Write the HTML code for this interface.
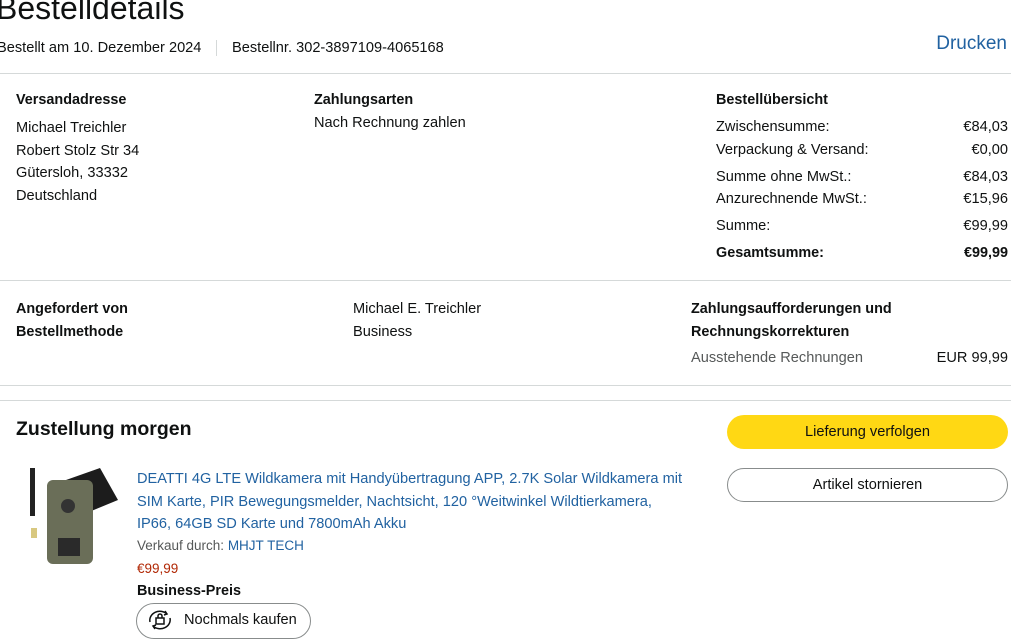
<!DOCTYPE html>
<html><head><meta charset="utf-8"><style>
*{margin:0;padding:0;box-sizing:border-box}
body{width:1011px;height:634px;overflow:hidden;background:#fff;font-family:"Liberation Sans",Arial,sans-serif;color:#0f1111;font-size:14.6px;position:relative}
.a{position:absolute;white-space:nowrap;line-height:20px}
.b{font-weight:bold;font-size:14.4px}
.hr{position:absolute;left:0;width:1011px;height:1px;background:#d5d9d9}
.r{text-align:right}
.lnk{color:#2162a1}
.btn{position:absolute;border-radius:20px;text-align:center;line-height:34px;font-size:14.6px}
</style></head><body>
<div class="a" style="left:-4px;top:-10px;font-size:32px;line-height:36px">Bestelldetails</div>
<div class="a" style="left:-3px;top:38px">Bestellt am 10. Dezember 2024</div>
<div style="position:absolute;left:216px;top:40px;width:1px;height:16px;background:#d5d9d9"></div>
<div class="a" style="left:232px;top:38px">Bestellnr. 302-3897109-4065168</div>
<div class="a lnk" style="right:4px;top:33px;font-size:19px;line-height:22px">Drucken</div>
<div class="hr" style="top:73px"></div>

<div class="a b" style="left:16px;top:90px">Versandadresse</div>
<div class="a" style="left:16px;top:117px;line-height:22.6px">Michael Treichler<br>Robert Stolz Str 34<br>Gütersloh, 33332<br>Deutschland</div>
<div class="a b" style="left:314px;top:90px">Zahlungsarten</div>
<div class="a" style="left:314px;top:113px">Nach Rechnung zahlen</div>
<div class="a b" style="left:716px;top:90px">Bestellübersicht</div>
<div class="a" style="left:716px;top:117px">Zwischensumme:</div><div class="a r" style="right:3px;top:117px">€84,03</div>
<div class="a" style="left:716px;top:140px">Verpackung &amp; Versand:</div><div class="a r" style="right:3px;top:140px">€0,00</div>
<div class="a" style="left:716px;top:167px">Summe ohne MwSt.:</div><div class="a r" style="right:3px;top:167px">€84,03</div>
<div class="a" style="left:716px;top:189px">Anzurechnende MwSt.:</div><div class="a r" style="right:3px;top:189px">€15,96</div>
<div class="a" style="left:716px;top:216px">Summe:</div><div class="a r" style="right:3px;top:216px">€99,99</div>
<div class="a b" style="left:716px;top:243px">Gesamtsumme:</div><div class="a r b" style="right:3px;top:243px">€99,99</div>
<div class="hr" style="top:280px"></div>

<div class="a b" style="left:16px;top:298px;line-height:23px">Angefordert von<br>Bestellmethode</div>
<div class="a" style="left:353px;top:298px;line-height:23px">Michael E. Treichler<br>Business</div>
<div class="a b" style="left:691px;top:298px;line-height:23px">Zahlungsaufforderungen und<br>Rechnungskorrekturen</div>
<div class="a" style="left:691px;top:348px;color:#565959">Ausstehende Rechnungen</div>
<div class="a r" style="right:3px;top:348px">EUR 99,99</div>
<div class="hr" style="top:385px"></div>
<div class="hr" style="top:400px"></div>

<div class="a" style="left:16px;top:417px;font-size:19.5px;line-height:24px;font-weight:bold">Zustellung morgen</div>
<div class="btn" style="left:727px;top:415px;width:281px;height:34px;background:#ffd814">Lieferung verfolgen</div>
<div class="btn" style="left:727px;top:468px;width:281px;height:34px;border:1px solid #888c8c;line-height:32px">Artikel stornieren</div>

<svg style="position:absolute;left:22px;top:466px" width="100" height="104" viewBox="0 0 100 104">
<rect x="8" y="2" width="5" height="48" fill="#222"/>
<polygon points="44,14 78,2 96,34 62,48" fill="#1c1c1c"/>
<rect x="25" y="14" width="46" height="84" rx="6" fill="#6a6e58"/>
<circle cx="46" cy="40" r="7" fill="#333"/>
<rect x="36" y="72" width="22" height="18" fill="#2a2a2a"/>
<rect x="9" y="62" width="6" height="10" fill="#d8c880"/>
</svg>
<div class="a lnk" style="left:137px;top:468px;line-height:22.5px">DEATTI 4G LTE Wildkamera mit Handyübertragung APP, 2.7K Solar Wildkamera mit<br>SIM Karte, PIR Bewegungsmelder, Nachtsicht, 120 °Weitwinkel Wildtierkamera,<br>IP66, 64GB SD Karte und 7800mAh Akku</div>
<div class="a" style="left:137px;top:536px;font-size:13.5px;color:#565959">Verkauf durch: <span class="lnk">MHJT TECH</span></div>
<div class="a" style="left:137px;top:559px;font-size:13.5px;color:#b12704">€99,99</div>
<div class="a b" style="left:137px;top:581px">Business-Preis</div>
<div class="btn" style="left:136px;top:603px;width:175px;height:36px;border:1px solid #888c8c;line-height:32px;text-align:left;padding-left:47px">Nochmals kaufen</div>
<svg style="position:absolute;left:146px;top:609px" width="28" height="22" viewBox="0 0 28 22" fill="none" stroke="#0f1111" stroke-width="1.5">
<path d="M4 13a10 9 0 0 1 17-8"/><path d="M24 9a10 9 0 0 1-17 8"/>
<path d="M19 2l2 3-3 1"/><path d="M9 20l-2-3 3-1"/>
<rect x="10" y="9" width="8" height="6"/><path d="M12 9V7a2 2 0 0 1 4 0v2"/>
</svg>
</body></html>
